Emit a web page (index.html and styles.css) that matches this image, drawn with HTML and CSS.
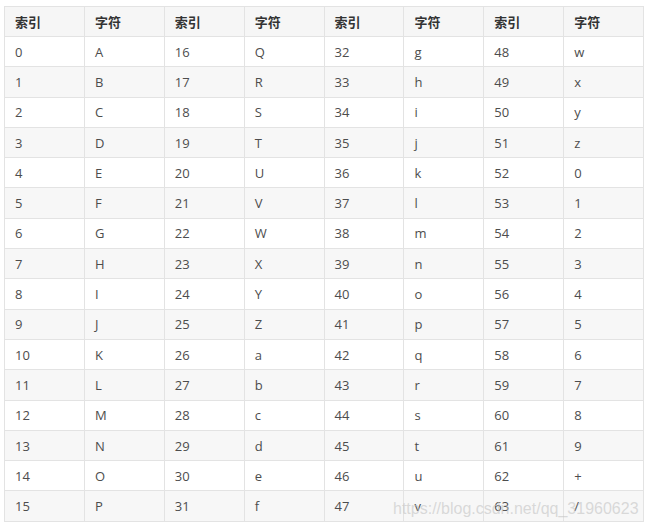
FILE: index.html
```html
<!DOCTYPE html>
<html lang="zh">
<head>
<meta charset="utf-8">
<link rel="stylesheet" href="styles.css">
</head>
<body>
<table class="b64">
<thead>
<tr><th>索引</th><th>字符</th><th>索引</th><th>字符</th><th>索引</th><th>字符</th><th>索引</th><th>字符</th></tr>
</thead>
<tbody>
<tr><td>0</td><td>A</td><td>16</td><td>Q</td><td>32</td><td>g</td><td>48</td><td>w</td></tr>
<tr><td>1</td><td>B</td><td>17</td><td>R</td><td>33</td><td>h</td><td>49</td><td>x</td></tr>
<tr><td>2</td><td>C</td><td>18</td><td>S</td><td>34</td><td>i</td><td>50</td><td>y</td></tr>
<tr><td>3</td><td>D</td><td>19</td><td>T</td><td>35</td><td>j</td><td>51</td><td>z</td></tr>
<tr><td>4</td><td>E</td><td>20</td><td>U</td><td>36</td><td>k</td><td>52</td><td>0</td></tr>
<tr><td>5</td><td>F</td><td>21</td><td>V</td><td>37</td><td>l</td><td>53</td><td>1</td></tr>
<tr><td>6</td><td>G</td><td>22</td><td>W</td><td>38</td><td>m</td><td>54</td><td>2</td></tr>
<tr><td>7</td><td>H</td><td>23</td><td>X</td><td>39</td><td>n</td><td>55</td><td>3</td></tr>
<tr><td>8</td><td>I</td><td>24</td><td>Y</td><td>40</td><td>o</td><td>56</td><td>4</td></tr>
<tr><td>9</td><td>J</td><td>25</td><td>Z</td><td>41</td><td>p</td><td>57</td><td>5</td></tr>
<tr><td>10</td><td>K</td><td>26</td><td>a</td><td>42</td><td>q</td><td>58</td><td>6</td></tr>
<tr><td>11</td><td>L</td><td>27</td><td>b</td><td>43</td><td>r</td><td>59</td><td>7</td></tr>
<tr><td>12</td><td>M</td><td>28</td><td>c</td><td>44</td><td>s</td><td>60</td><td>8</td></tr>
<tr><td>13</td><td>N</td><td>29</td><td>d</td><td>45</td><td>t</td><td>61</td><td>9</td></tr>
<tr><td>14</td><td>O</td><td>30</td><td>e</td><td>46</td><td>u</td><td>62</td><td>+</td></tr>
<tr><td>15</td><td>P</td><td>31</td><td>f</td><td>47</td><td>v</td><td>63</td><td>/</td></tr>
</tbody>
</table>
<div class="watermark">https://blog.csdn.net/qq_31960623</div>
</body>
</html>
```
FILE: styles.css
```css
html, body {
  margin: 0;
  padding: 0;
  background: #ffffff;
}
body {
  padding: 6px 0 0 4px;
  font-family: "Open Sans", "Noto Sans CJK SC", sans-serif;
  font-size: 13px;
  color: #4d4d4d;
  position: relative;
  height: 530px;
  box-sizing: border-box;
  overflow: hidden;
}
.b64 {
  border-collapse: collapse;
  table-layout: fixed;
  width: 640px;
}
.b64 th,
.b64 td {
  border: 1px solid #e3e3e3;
  text-align: left;
  padding: 0 0 0 10px;
  vertical-align: middle;
  white-space: nowrap;
  line-height: 18px;
}
.b64 th {
  height: 29px;
  font-family: "Noto Sans CJK SC", sans-serif;
  font-weight: 700;
  color: #333333;
  background: #f6f6f6;
}
.b64 td {
  height: 29.3px;
}
.b64 tbody tr:nth-child(odd) td {
  background: #ffffff;
}
.b64 tbody tr:nth-child(even) td {
  background: #f7f7f7;
}
.watermark {
  position: absolute;
  left: 393px;
  top: 500px;
  font-family: "Liberation Sans", sans-serif;
  font-size: 16px;
  color: rgba(195, 195, 195, 0.6);
  pointer-events: none;
}
```
